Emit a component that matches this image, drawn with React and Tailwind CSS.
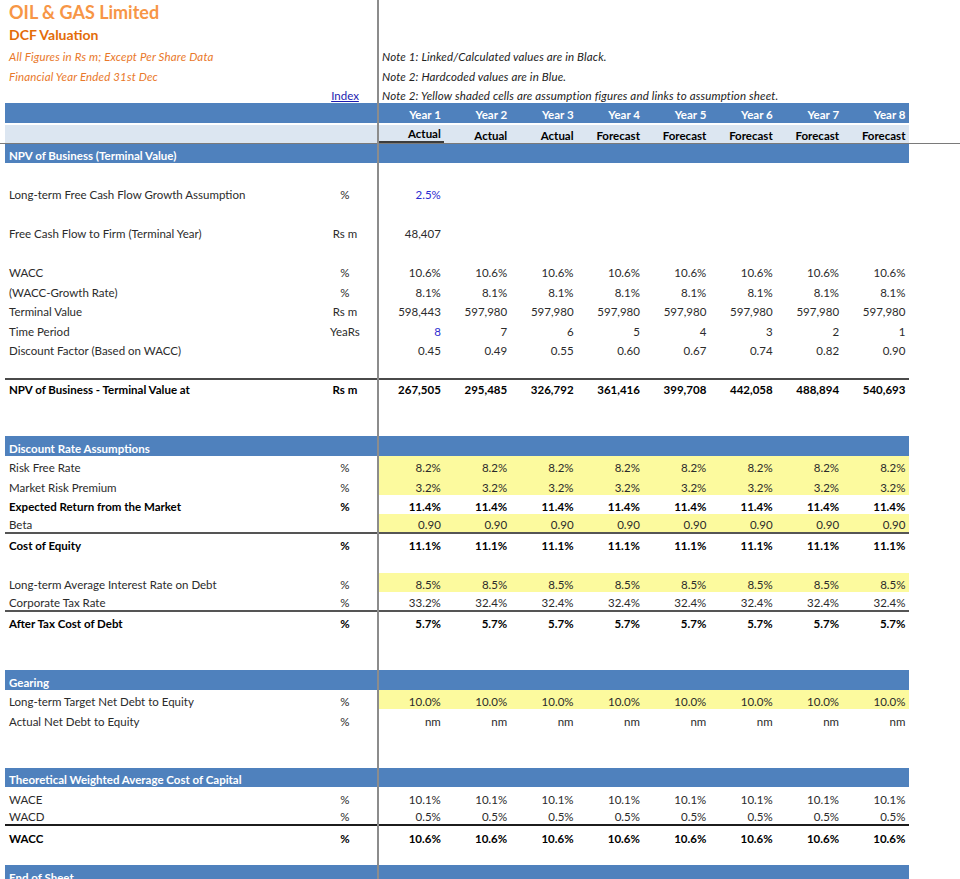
import React from "react";

const rep = (v, n = 8) => Array(n).fill(v);

const yearCols = ["Year 1", "Year 2", "Year 3", "Year 4", "Year 5", "Year 6", "Year 7", "Year 8"];
const kinds = ["Actual", "Actual", "Actual", "Forecast", "Forecast", "Forecast", "Forecast", "Forecast"];

const rows = [
    { header: "NPV of Business (Terminal Value)" },
    {},
    { label: "Long-term Free Cash Flow Growth Assumption", unit: "%", vals: ["2.5%"], blue: [0] },
    {},
    { label: "Free Cash Flow to Firm (Terminal Year)", unit: "Rs m", vals: ["48,407"] },
    {},
    { label: "WACC", unit: "%", vals: rep("10.6%") },
    { label: "(WACC-Growth Rate)", unit: "%", vals: rep("8.1%") },
    { label: "Terminal Value", unit: "Rs m", vals: ["598,443", ...rep("597,980", 7)] },
    { label: "Time Period", unit: "YeaRs", vals: ["8", "7", "6", "5", "4", "3", "2", "1"], blue: [0] },
    { label: "Discount Factor (Based on WACC)", unit: "", vals: ["0.45", "0.49", "0.55", "0.60", "0.67", "0.74", "0.82", "0.90"] },
    {},
    {
        label: "NPV of Business - Terminal Value at", unit: "Rs m", bold: true, top: true,
        vals: ["267,505", "295,485", "326,792", "361,416", "399,708", "442,058", "488,894", "540,693"],
    },
    {},
    {},
    { header: "Discount Rate Assumptions" },
    { label: "Risk Free Rate", unit: "%", vals: rep("8.2%"), yellow: true },
    { label: "Market Risk Premium", unit: "%", vals: rep("3.2%"), yellow: true },
    { label: "Expected Return from the Market", unit: "%", vals: rep("11.4%"), bold: true },
    { label: "Beta", unit: "", vals: rep("0.90"), yellow: true, bottom: true },
    { label: "Cost of Equity", unit: "%", vals: rep("11.1%"), bold: true },
    {},
    { label: "Long-term Average Interest Rate on Debt", unit: "%", vals: rep("8.5%"), yellow: true },
    { label: "Corporate Tax Rate", unit: "%", vals: ["33.2%", ...rep("32.4%", 7)], bottom: true },
    { label: "After Tax Cost of Debt", unit: "%", vals: rep("5.7%"), bold: true },
    {},
    {},
    { header: "Gearing" },
    { label: "Long-term Target Net Debt to Equity", unit: "%", vals: rep("10.0%"), yellow: true },
    { label: "Actual Net Debt to Equity", unit: "%", vals: rep("nm") },
    {},
    {},
    { header: "Theoretical Weighted Average Cost of Capital" },
    { label: "WACE", unit: "%", vals: rep("10.1%") },
    { label: "WACD", unit: "%", vals: rep("0.5%"), bottom: true, dark: true },
    { label: "WACC", unit: "%", vals: rep("10.6%"), bold: true },
    {},
    { header: "End of Sheet" },
];

const Row = ({ r }) => {
    if (r.header) {
        return (
            <div className="ml-[5px] w-[904px] h-[19.5px] flex items-end pb-[1px] pl-[4px] bg-[#4f81bd] text-white font-bold text-[11.5px] leading-[13px]">
                {r.header}
            </div>
        );
    }
    if (!r.label) return <div className="h-[19.5px]" />;
    const border = r.top
        ? "border-t-2 border-[#4a4a4a]"
        : r.bottom
        ? r.dark
            ? "border-b-2 border-[#1c1c1c]"
            : "border-b-2 border-[#555555]"
        : "";
    return (
        <div className={`ml-[5px] w-[904px] h-[19.5px] flex text-[11.5px] leading-[13px] ${r.bold ? "font-bold text-black" : "text-[#2b2b2b]"} ${border}`}>
            <div className="w-[307px] flex items-end pb-[1px] pl-[4px]">{r.label}</div>
            <div className="w-[66px] flex items-end justify-center pb-[1px]">{r.unit}</div>
            {Array.from({ length: 8 }).map((_, i) => (
                <div
                    key={i}
                    className={`w-[66.4px] flex items-end justify-end pb-[1px] pr-[3.5px] ${r.yellow ? "bg-[#fcfa9e]" : ""} ${r.blue && r.blue.includes(i) ? "text-[#2c2cd0]" : ""}`}
                >
                    {r.vals[i] || ""}
                </div>
            ))}
        </div>
    );
};

export default function App() {
    return (
        <div className="relative w-[960px] h-[879px] overflow-hidden bg-white font-['Lato',sans-serif]">
            {/* title block + notes */}
            <div className="flex">
                <div className="w-[378px]">
                    <div className="h-[24.5px] flex items-center pl-[9px] text-[18px] font-bold text-[#f79646]">OIL &amp; GAS Limited</div>
                    <div className="h-[20.1px] flex items-center pl-[9px] text-[14px] font-bold text-[#e36c09]">DCF Valuation</div>
                    <div className="h-[19.5px] flex items-end pb-[1px] pl-[9px] text-[11.5px] tracking-[0.15px] italic leading-[13px] text-[#e9782a]">All Figures in Rs m; Except Per Share Data</div>
                    <div className="h-[19.5px] flex items-end pb-[1px] pl-[9px] text-[11.5px] tracking-[0.15px] italic leading-[13px] text-[#e9782a]">Financial Year Ended 31st Dec</div>
                    <div className="h-[19.5px] flex items-end pb-[1px]">
                        <div className="w-[312px]" />
                        <div className="w-[66px] text-center text-[11.5px] leading-[13px] underline text-[#1c1cb0]">Index</div>
                    </div>
                </div>
                <div className="pt-[44.6px] pl-[4px] text-[11.5px] tracking-[0.15px] italic leading-[13px] text-[#222]">
                    <div className="h-[19.5px] flex items-end pb-[1px]">Note 1: Linked/Calculated values are in Black.</div>
                    <div className="h-[19.5px] flex items-end pb-[1px]">Note 2: Hardcoded values are in Blue.</div>
                    <div className="h-[19.5px] flex items-end pb-[1px]">Note 2: Yellow shaded cells are assumption figures and links to assumption sheet.</div>
                </div>
            </div>

            {/* year header */}
            <div className="ml-[5px] w-[904px] h-[19.5px] flex bg-[#4f81bd] text-white font-bold text-[11.5px] leading-[13px]">
                <div className="w-[373px]" />
                {yearCols.map((y) => (
                    <div key={y} className="w-[66.4px] flex items-end justify-end pb-[2px] pr-[3.5px]">{y}</div>
                ))}
            </div>
            <div className="ml-[5px] w-[904px] h-[20px] flex border-t-2 border-white bg-[#dce6f1] text-black font-bold text-[11.5px] leading-[13px]">
                <div className="w-[373px]" />
                {kinds.map((k, i) => (
                    <div key={i} className={`w-[66.4px] flex items-end justify-end pb-[1px] pr-[3.5px] ${i === 0 ? "border-b-2 border-[#3c3c3c]" : ""}`}>{k}</div>
                ))}
            </div>
            <div className="h-px w-full bg-[#7a7a7a]" />

            {rows.map((r, i) => (
                <Row key={i} r={r} />
            ))}

            {/* frozen pane split */}
            <div className="absolute left-[377px] top-0 bottom-0 w-[2px] bg-[#8c8c8c]" />
        </div>
    );
}
